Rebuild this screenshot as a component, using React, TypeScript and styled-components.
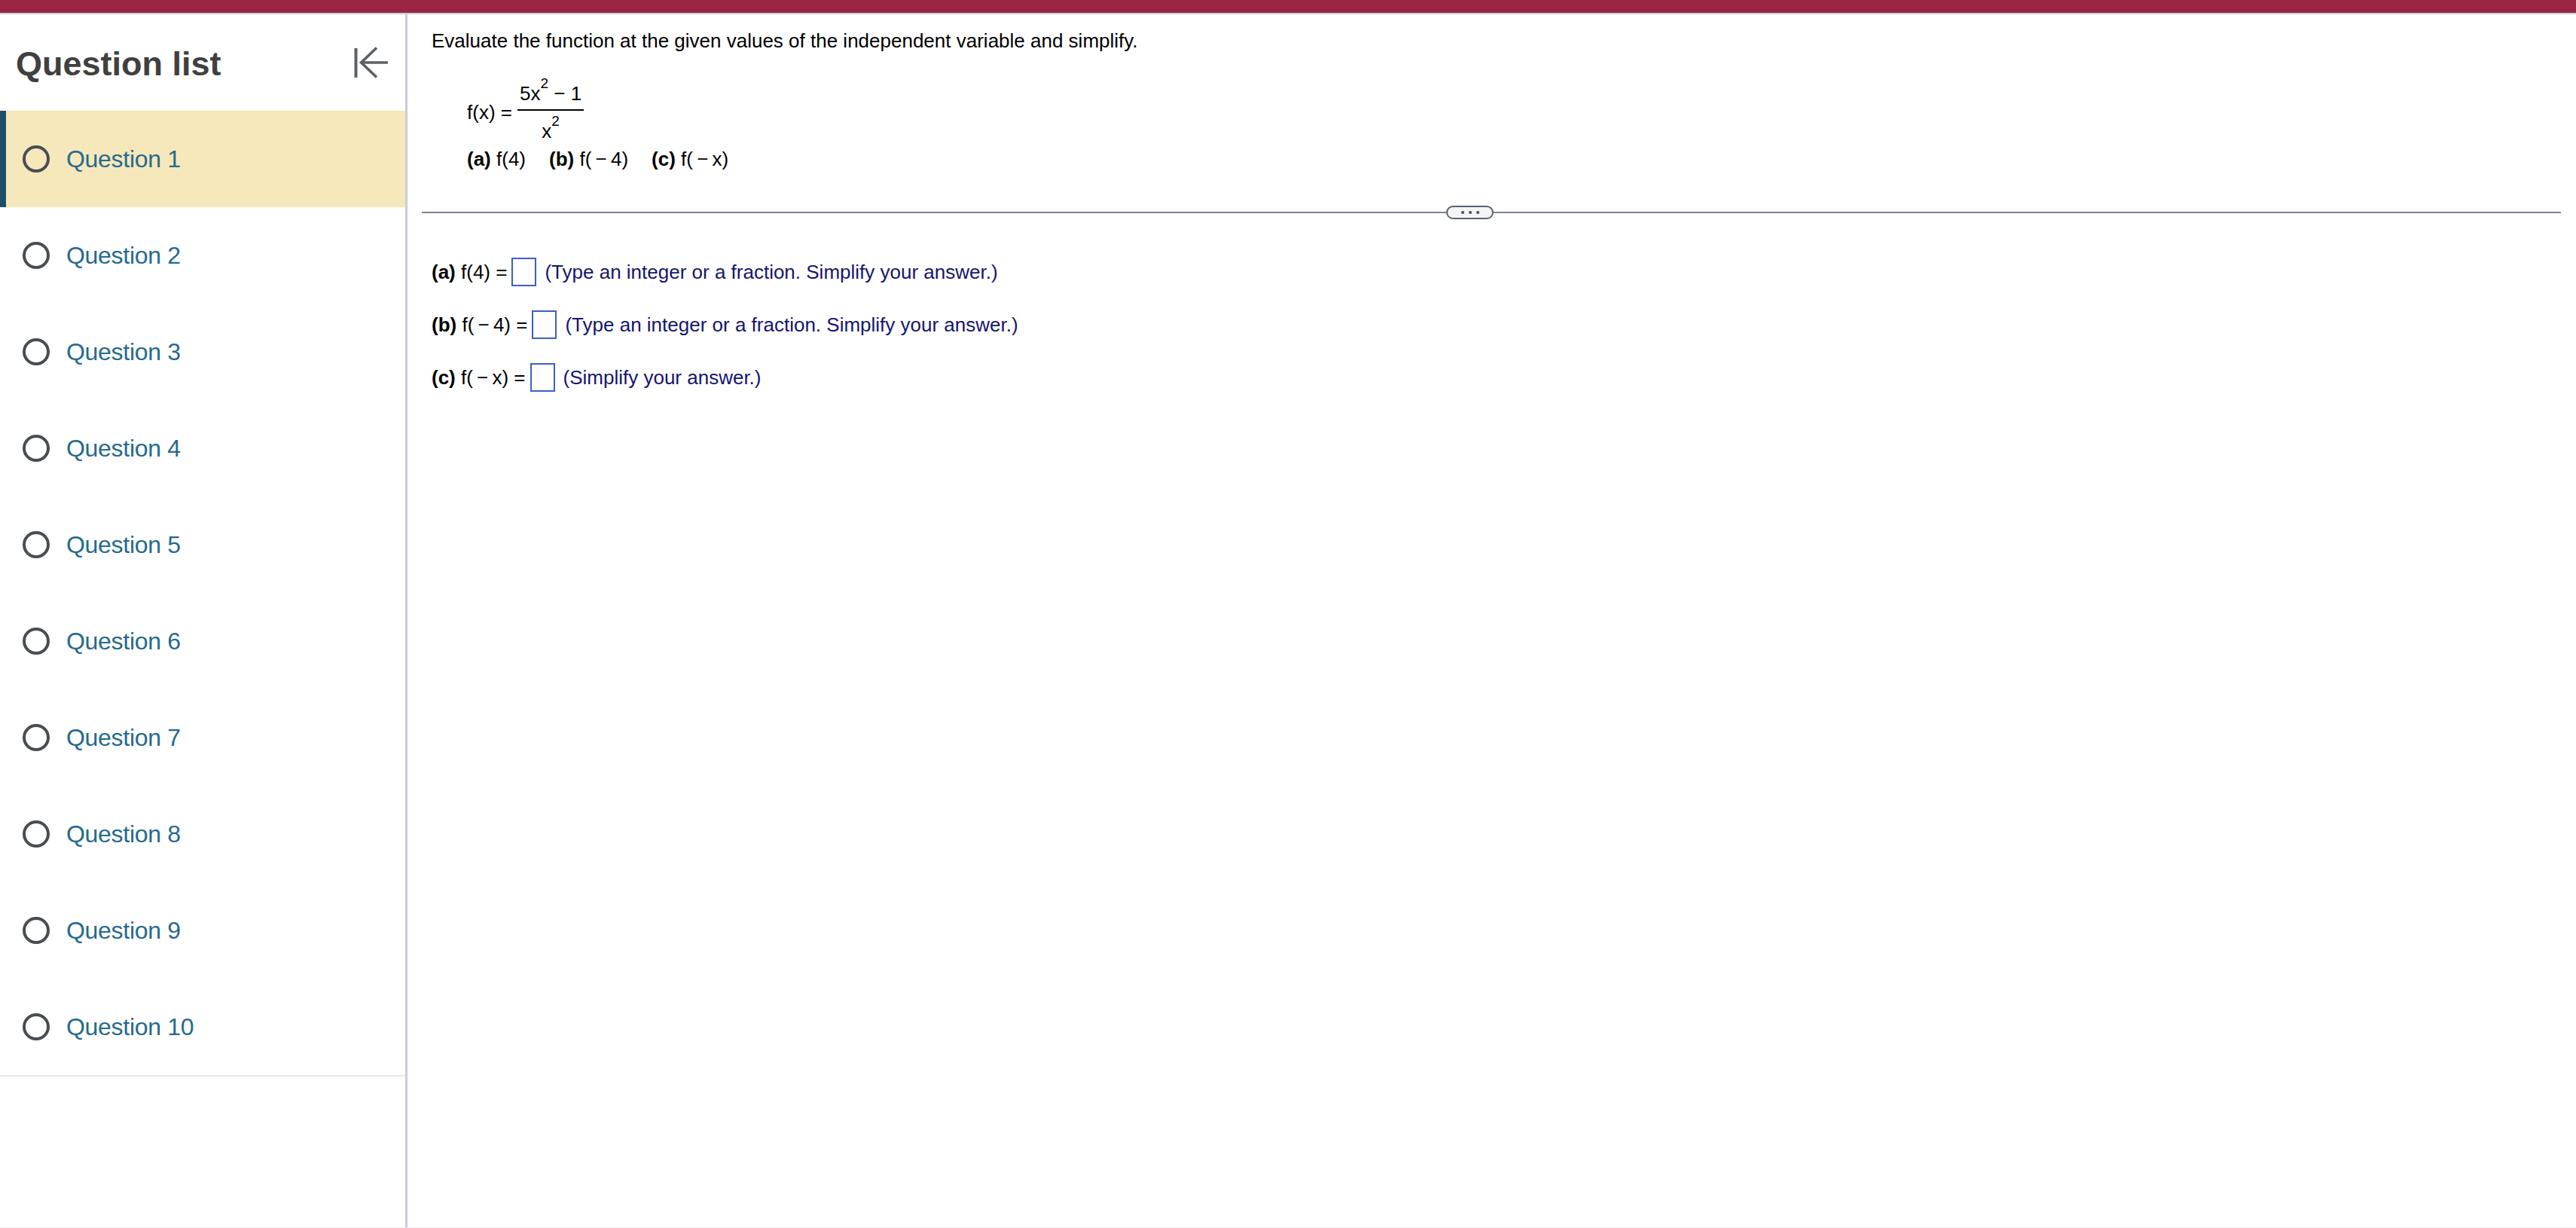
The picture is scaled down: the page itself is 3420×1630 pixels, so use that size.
import styled, { createGlobalStyle } from "styled-components";

const GlobalStyle = createGlobalStyle`
  html, body {
    margin: 0;
    padding: 0;
    background: #fff;
  }
  body {
    font-family: "Liberation Sans", Arial, Helvetica, sans-serif;
  }
  * {
    box-sizing: border-box;
  }
`;

const Page = styled.div`
  height: 100vh;
  display: flex;
  flex-direction: column;
`;

const TopBar = styled.div`
  height: 19px;
  flex: 0 0 19px;
  background: #9b2443;
  border-bottom: 2px solid #c6d0da;
`;

const Body = styled.div`
  flex: 1;
  display: flex;
  min-height: 0;
  border-bottom: 1px solid #ececec;
`;

const Sidebar = styled.aside`
  width: 541px;
  flex: 0 0 541px;
  border-right: 3px solid #c9ccd9;
  display: flex;
  flex-direction: column;
`;

const SidebarHeader = styled.div`
  height: 128px;
  display: flex;
  align-items: center;
  justify-content: space-between;
  padding: 0 22px 0 21px;
`;

const Heading = styled.h2`
  margin: 0;
  padding-top: 4px;
  font-size: 45px;
  line-height: 52px;
  font-weight: 700;
  color: #404040;
`;

const CollapseButton = styled.button`
  border: 0;
  background: none;
  padding: 0;
  width: 46px;
  height: 42px;
  display: flex;
  cursor: pointer;
`;

const QuestionList = styled.ul`
  list-style: none;
  margin: 0;
  padding: 0;
  border-bottom: 2px solid #e8e8e8;
`;

const QuestionRow = styled.li<{ $active?: boolean }>`
  height: 128px;
  display: flex;
  align-items: center;
  gap: 22px;
  padding-left: 22px;
  border-left: 8px solid ${(p) => (p.$active ? "#1f4f68" : "transparent")};
  background: ${(p) => (p.$active ? "#f6e8bb" : "transparent")};
  cursor: pointer;
`;

const Radio = styled.span`
  width: 36px;
  height: 36px;
  border-radius: 50%;
  border: 4px solid #474d53;
  flex: 0 0 36px;
`;

const QuestionLabel = styled.span`
  font-size: 32px;
  letter-spacing: -0.3px;
  color: #266a8e;
  line-height: 40px;
`;

const Main = styled.main`
  flex: 1;
  display: flex;
  flex-direction: column;
  padding-top: 20px;
  color: #000;
  font-size: 26px;
  line-height: 30px;
`;

const Prompt = styled.p`
  margin: 0;
  padding-left: 32px;
`;

const FunctionRow = styled.div`
  display: flex;
  align-items: center;
  margin-top: 40px;
  padding-left: 79px;
`;

const Fraction = styled.div`
  display: flex;
  flex-direction: column;
  align-items: center;
  margin-left: 7px;
`;

const Numerator = styled.div`
  padding: 0 3px;
  white-space: nowrap;
`;

const FractionBar = styled.div`
  align-self: stretch;
  height: 2px;
  background: #000;
  margin-top: 6px;
`;

const Denominator = styled.div`
  margin-top: 12px;
  white-space: nowrap;
`;

const Sup = styled.sup`
  font-size: 19px;
  vertical-align: 16px;
  line-height: 0;
`;

const PartsRow = styled.div`
  display: flex;
  gap: 31px;
  margin-top: 7px;
  padding-left: 79px;
  white-space: pre;
`;

const Label = styled.b`
  font-weight: 700;
`;

const Divider = styled.div`
  display: flex;
  align-items: center;
  height: 18px;
  margin: 47px 20px 0 19px;
`;

const DividerLine = styled.div<{ $grow?: boolean }>`
  height: 2px;
  background: #7d8394;
  flex: ${(p) => (p.$grow ? "1" : "0 0 calc(50% - 60px)")};
`;

const Handle = styled.button`
  width: 63px;
  height: 18px;
  flex: 0 0 63px;
  border: 2px solid #5a6271;
  border-radius: 10px;
  background: #f3f4f6;
  display: flex;
  align-items: center;
  justify-content: center;
  gap: 6px;
  padding: 0;
  cursor: pointer;
`;

const Dot = styled.span`
  width: 4px;
  height: 4px;
  border-radius: 50%;
  background: #464b56;
`;

const Answers = styled.div`
  display: flex;
  flex-direction: column;
  gap: 32px;
  margin-top: 51px;
  padding-left: 32px;
`;

const AnswerRow = styled.div`
  display: flex;
  align-items: center;
  height: 38px;
  white-space: pre;
`;

const AnswerBox = styled.span`
  width: 33px;
  height: 38px;
  border: 2px solid #3b5fc8;
  margin: 0 11px 0 6px;
  flex: 0 0 33px;
`;

const Hint = styled.span`
  color: #15156f;
`;

const THIN = "\u2009";
const MINUS = "\u2212";

const questions = Array.from({ length: 10 }, (_, i) => `Question ${i + 1}`);

const answers = [
  { label: "(a)", expr: " f(4) =", hint: "(Type an integer or a fraction. Simplify your answer.)" },
  { label: "(b)", expr: ` f(${THIN}${MINUS}${THIN}4) =`, hint: "(Type an integer or a fraction. Simplify your answer.)" },
  { label: "(c)", expr: ` f(${THIN}${MINUS}${THIN}x) =`, hint: "(Simplify your answer.)" },
];

const CollapseIcon = () => (
  <svg width="46" height="42" viewBox="0 0 46 42" fill="none" stroke="#5b6165" strokeWidth="3.6">
    <line x1="2.5" y1="2" x2="2.5" y2="41" strokeWidth="4" />
    <path d="M45 21H9" />
    <path d="M30 1.5L9.5 21L30 40.5" strokeLinejoin="miter" />
  </svg>
);

export default function App() {
  return (
    <Page>
      <GlobalStyle />
      <TopBar />
      <Body>
        <Sidebar>
          <SidebarHeader>
            <Heading>Question list</Heading>
            <CollapseButton aria-label="Collapse question list">
              <CollapseIcon />
            </CollapseButton>
          </SidebarHeader>
          <QuestionList>
            {questions.map((q, i) => (
              <QuestionRow key={q} $active={i === 0}>
                <Radio />
                <QuestionLabel>{q}</QuestionLabel>
              </QuestionRow>
            ))}
          </QuestionList>
        </Sidebar>

        <Main>
          <Prompt>Evaluate the function at the given values of the independent variable and simplify.</Prompt>

          <FunctionRow>
            <span>f(x) =</span>
            <Fraction>
              <Numerator>
                5x<Sup>2</Sup> {MINUS} 1
              </Numerator>
              <FractionBar />
              <Denominator>
                x<Sup>2</Sup>
              </Denominator>
            </Fraction>
          </FunctionRow>

          <PartsRow>
            <span>
              <Label>(a)</Label> f(4)
            </span>
            <span>
              <Label>(b)</Label> f({THIN}
              {MINUS}
              {THIN}4)
            </span>
            <span>
              <Label>(c)</Label> f({THIN}
              {MINUS}
              {THIN}x)
            </span>
          </PartsRow>

          <Divider>
            <DividerLine />
            <Handle aria-label="Resize">
              <Dot />
              <Dot />
              <Dot />
            </Handle>
            <DividerLine $grow />
          </Divider>

          <Answers>
            {answers.map((a) => (
              <AnswerRow key={a.label}>
                <Label>{a.label}</Label>
                <span>{a.expr}</span>
                <AnswerBox />
                <Hint>{a.hint}</Hint>
              </AnswerRow>
            ))}
          </Answers>
        </Main>
      </Body>
    </Page>
  );
}
